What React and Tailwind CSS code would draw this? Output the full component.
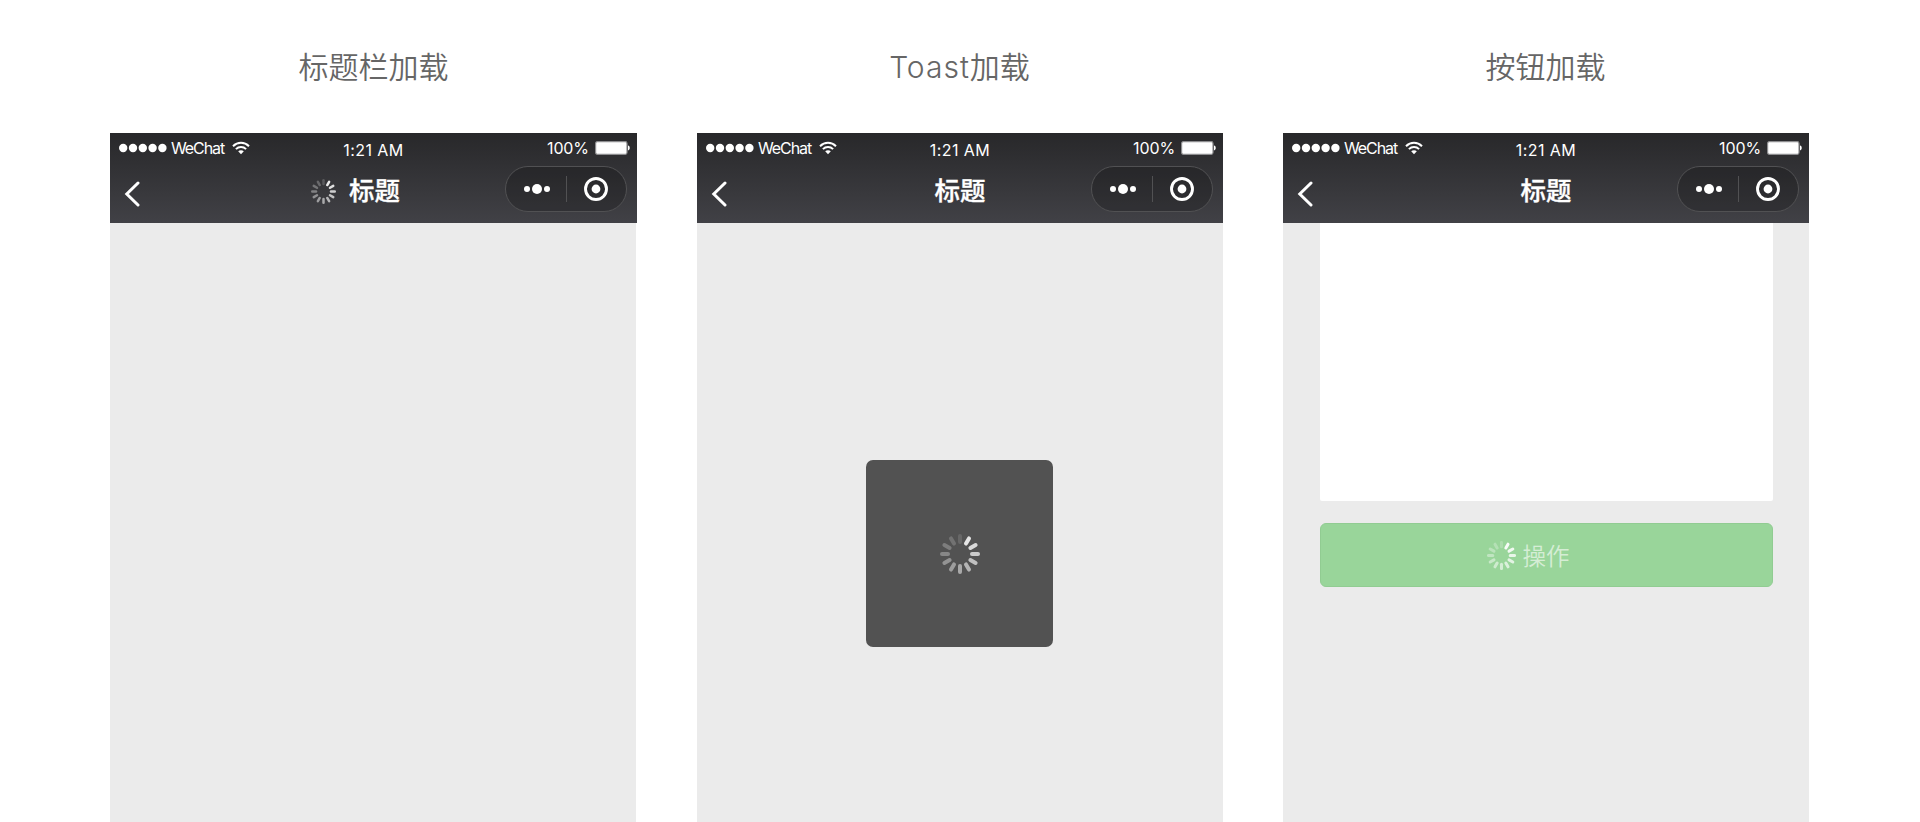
import React from "react";

const OPACITIES = [0.12, 0.85, 0.78, 0.7, 0.64, 0.57, 0.5, 0.44, 0.38, 0.31, 0.25, 0.19];

function Spinner({ className, strokeWidth = 4, boost = 0 }) {
  return (
    <svg viewBox="0 0 40 40" className={className} fill="none" stroke="#fff" strokeWidth={strokeWidth} strokeLinecap="round">
      {OPACITIES.map((o, i) => (
        <path key={i} d="M20 2V8" opacity={Math.min(1, o + boost)} transform={`rotate(${i * 30} 20 20)`} />
      ))}
    </svg>
  );
}

function StatusBar() {
  return (
    <div className="grid h-[30px] grid-cols-3 items-center pl-[9px] pr-[7px] text-[16px] leading-[20px]">
      <div className="flex items-center">
        <svg viewBox="0 0 49 10" className="h-[10px] w-[49px] fill-white">
          {[0, 1, 2, 3, 4].map((i) => (
            <circle key={i} cx={4.2 + i * 9.8} cy="5" r="4.2" />
          ))}
        </svg>
        <span className="ml-[3px] w-[54px] whitespace-nowrap tracking-[-1.1px]">WeChat</span>
        <svg viewBox="0 0 18 14" className="ml-[7px] h-[14px] w-[18px]" fill="none" stroke="#fff" strokeWidth="2">
          <path d="M1 5.2C5.6.7 12.4.7 17 5.2" />
          <path d="M3.9 8.1C6.8 5.3 11.2 5.3 14.1 8.1" />
          <path d="M9 13.2L6.2 10.3C7.8 8.9 10.2 8.9 11.8 10.3Z" fill="#fff" stroke="none" />
        </svg>
      </div>
      <div className="pr-[2px] pt-[3px] text-center tracking-[0.45px]">1:21 AM</div>
      <div className="flex items-center justify-end">
        <span className="tracking-[-0.1px]">100%</span>
        <svg viewBox="0 0 35 14" className="ml-[6px] h-[14px] w-[35px]">
          <rect x="0.6" y="0.6" width="31.4" height="12.8" rx="1.8" fill="#fff" stroke="#8d8d8f" strokeWidth="1.2" />
          <path d="M33 4.6C35.3 5 35.3 9 33 9.4Z" fill="#fff" />
        </svg>
      </div>
    </div>
  );
}

function Capsule() {
  return (
    <div className="flex h-[46px] w-[122px] items-center rounded-full border border-[#515153] bg-black/20">
      <div className="flex w-[60px] items-center justify-center gap-[2.5px] pl-[2px]">
        <span className="size-[6px] rounded-full bg-white" />
        <span className="size-[9.5px] rounded-full bg-white" />
        <span className="size-[6px] rounded-full bg-white" />
      </div>
      <div className="h-[26px] w-px bg-[#515153]" />
      <div className="flex flex-1 justify-center">
        <svg viewBox="0 0 24 24" className="size-[24px]">
          <circle cx="12" cy="12" r="10.5" fill="none" stroke="#fff" strokeWidth="2.9" />
          <circle cx="12" cy="12" r="4.4" fill="#fff" />
        </svg>
      </div>
    </div>
  );
}

function Phone({ caption, loading, children }) {
  return (
    <section className={loading ? "flex w-[527px] flex-col" : "flex w-[526px] flex-col"}>
      <h2 className="flex h-[133px] items-center justify-center pt-px text-[30px] font-[350] text-[#666]">
        {caption}
      </h2>
      <header className="h-[90px] bg-linear-to-b from-[#28282a] to-[#414146] text-white">
        <StatusBar />
        <div className="flex h-[53px] items-center justify-between pb-px pl-[14px] pr-[10px]">
          <div className="w-[122px] pt-[9px]">
            <svg viewBox="0 0 18 26" className="h-[26px] w-[18px]" fill="none" stroke="#fff" strokeWidth="3" strokeLinecap="round">
              <path d="M14 2L2.8 13L14 24" />
            </svg>
          </div>
          <div className={loading ? "flex items-center gap-[13px] pr-[40px] pt-[4px]" : "flex items-center pr-[4px] pt-[4px]"}>
            {loading && <Spinner className="size-[25px]" strokeWidth={4} boost={0.06} />}
            <span className="text-[25.5px] font-medium leading-[36px] [-webkit-text-stroke:0.3px_white]">标题</span>
          </div>
          <Capsule />
        </div>
      </header>
      <main className="flex w-[526px] flex-1 flex-col items-center bg-[#ebebeb]">{children}</main>
    </section>
  );
}

export default function App() {
  return (
    <div className="flex h-[822px] w-[1920px] gap-[60px] overflow-hidden bg-white pl-[110px] font-['Inter','Noto_Sans_CJK_SC',sans-serif]">
      <Phone caption="标题栏加载" loading />
      <Phone
        caption={
          <span className="-ml-px">
            <span className="tracking-[1px]">Toast</span>加载
          </span>
        }
      >
        <div className="mr-px mt-[237px] flex h-[187px] w-[187px] items-center justify-center rounded-[7px] bg-[#525252]">
          <Spinner className="size-[40px]" />
        </div>
      </Phone>
      <Phone caption={<span className="-ml-px">按钮加载</span>}>
        <div className="h-[278px] w-[453px] rounded-b-[2px] bg-white" />
        <button className="mt-[22px] flex h-[64px] w-[453px] items-center justify-center gap-[7px] rounded-[6px] border border-[#91cc92] bg-[#99d59a] pr-[36px] text-[23.5px] font-[350] text-white/60">
          <Spinner className="size-[29px]" strokeWidth={4.2} boost={0.08} />
          <span className="pt-[3px]">操作</span>
        </button>
      </Phone>
    </div>
  );
}
